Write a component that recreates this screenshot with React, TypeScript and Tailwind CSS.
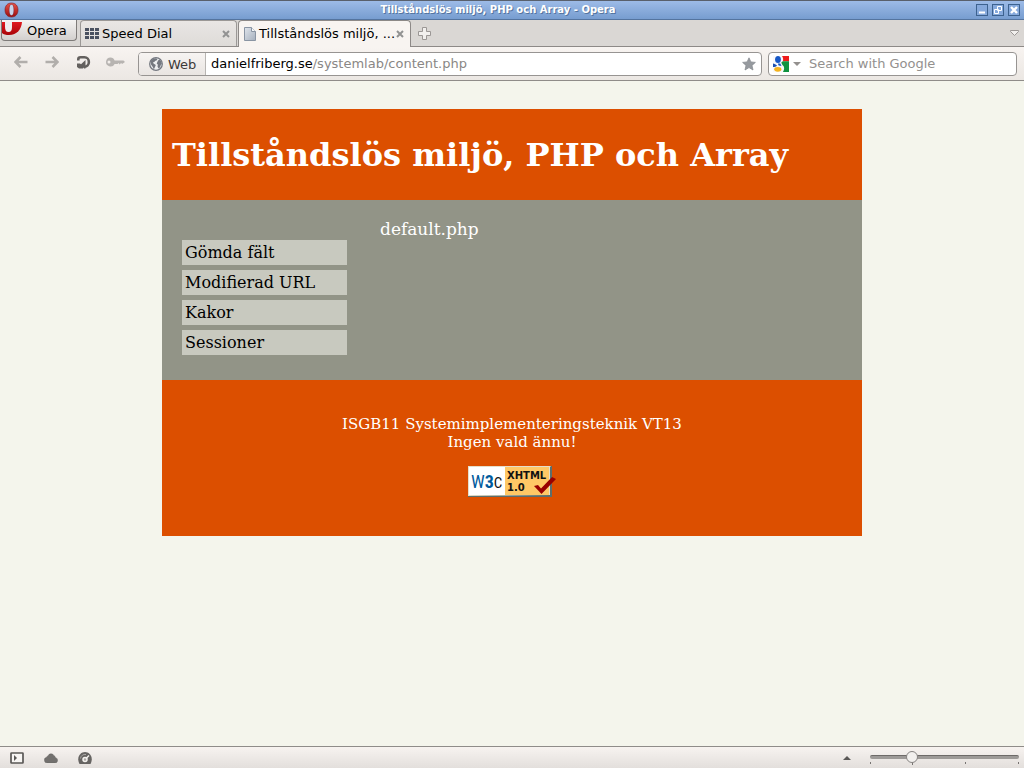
import React from "react";

const menuItems = ["Gömda fält", "Modifierad URL", "Kakor", "Sessioner"];

function OperaIcon() {
  return (
    <svg className="ml-1 h-4 w-4 shrink-0" viewBox="0 0 16 16" aria-hidden="true">
      <defs>
        <linearGradient id="operaRed" x1="0" y1="0" x2="0" y2="1">
          <stop offset="0" stopColor="#e8544a" />
          <stop offset="1" stopColor="#9c0f0f" />
        </linearGradient>
      </defs>
      <path
        fillRule="evenodd"
        fill="url(#operaRed)"
        stroke="#7e1a1e"
        strokeWidth="0.6"
        d="M7.500 1C3.500 1 1 3.800 1 8s2.500 7 6.500 7S14 12.200 14 8 11.500 1 7.500 1zM7.500 2.600c1.600 0 2.200 2.200 2.200 5.400s-.6 5.400-2.200 5.400S5.300 11.200 5.300 8s.6-5.400 2.200-5.400z"
      />
      <ellipse cx="7.500" cy="8" rx="2" ry="5.200" fill="#c9d4ea" />
    </svg>
  );
}

function OperaCorner() {
  return (
    <svg className="h-4 w-5 shrink-0 self-start" viewBox="0 0 20 16" aria-hidden="true">
      <defs>
        <linearGradient id="cornerRed" x1="0" y1="0" x2="0" y2="1">
          <stop offset="0" stopColor="#e01a20" />
          <stop offset="1" stopColor="#a90509" />
        </linearGradient>
      </defs>
      <path d="M0 2h20c-.5 7-5 13-13 13-3 0-5.500-.6-7-2z" fill="url(#cornerRed)" />
      <path d="M3 0h7v7c0 3.300-1 5-3.500 5S3 10 3 7z" fill="#efeeee" />
      <path d="M0 0h20v2H0z" fill="#f4f3f2" />
    </svg>
  );
}

function CloseX() {
  return (
    <svg className="h-2 w-2" viewBox="0 0 8 8" aria-hidden="true">
      <path d="M1 1l6 6M7 1l-6 6" stroke="#929292" strokeWidth="2" />
    </svg>
  );
}

function GridIcon() {
  return (
    <svg className="h-3 w-[15px] shrink-0" viewBox="0 0 15 12" fill="#4a5160" aria-hidden="true">
      {[0, 4, 8].map((y) =>
        [0, 5, 10].map((x) => <rect key={`${x}-${y}`} x={x} y={y} width="4" height="3" />)
      )}
    </svg>
  );
}

function PageIcon() {
  return (
    <svg className="h-[14px] w-3 shrink-0" viewBox="0 0 12 14" aria-hidden="true">
      <defs>
        <linearGradient id="pageFill" x1="0" y1="0" x2="1" y2="1">
          <stop offset="0" stopColor="#e0e5ec" />
          <stop offset="1" stopColor="#a5afbd" />
        </linearGradient>
      </defs>
      <path d="M.5.5h7l4 4v9H.5z" fill="url(#pageFill)" stroke="#8994a3" />
      <path d="M7.500.5v4h4" fill="#f6f8fa" stroke="#8994a3" />
    </svg>
  );
}

function Arrow({ back = false }: { back?: boolean }) {
  return (
    <svg className="h-3 w-[14px]" viewBox="0 0 14 12" aria-hidden="true">
      <path
        d={back ? "M13.500 6H2M6.500 1L1.500 6l5 5" : "M.5 6H12M7.500 1l5 5-5 5"}
        fill="none"
        stroke="#b1aeab"
        strokeWidth="2.600"
      />
    </svg>
  );
}

function ReloadIcon() {
  return (
    <svg className="h-[14px] w-[14px]" viewBox="0 0 14 14" aria-hidden="true">
      <path d="M1.300 5.500V4.200Q1.300 2.300 3.500 2.300H7.500A4.300 4.600 0 0 1 7.500 11.700H7" fill="none" stroke="#63605e" strokeWidth="2.600" />
      <path d="M8.500 5v8.500H7L3.500 9.800zM0 8.500h3l3 2.500v2.500H2L0 12z" fill="#63605e" />
    </svg>
  );
}

function KeyIcon() {
  return (
    <svg className="h-[10px] w-5" viewBox="0 0 20 10" aria-hidden="true">
      <path
        fillRule="evenodd"
        fill="#b7b4b1"
        d="M4.500.5A4.500 4.500 0 1 0 8.600 7h3l1-1 1 1.500 1.500-1.500 1 1 2.900-2L17.500 3.500H8.600A4.500 4.500 0 0 0 4.500.5zM3 3.500a1.500 1.500 0 1 1 0 3 1.500 1.500 0 0 1 0-3z"
      />
    </svg>
  );
}

function GlobeIcon() {
  return (
    <svg className="h-[14px] w-[14px]" viewBox="0 0 14 14" aria-hidden="true">
      <circle cx="7" cy="7" r="6.300" fill="#eceef0" stroke="#747880" strokeWidth="1.300" />
      <path d="M1.500 4L4 1.800l3-.6 1.500.8-1 1.500-1.700.4L5.600 5 4 5.300l.5 1.200L6.800 8 6 10l-1.200 2.500L3.800 10 2 7.500zM9 3.500l1.500-1 1.800 2 .6 2.500-1 .8-1 2.700-1.400 1-1-2 .4-1.800L7.700 6.500z" fill="#747880" />
    </svg>
  );
}

function StarIcon() {
  return (
    <svg className="h-[14px] w-[14px]" viewBox="0 0 14 14" aria-hidden="true">
      <path d="M7 .8l1.900 4.100 4.500.5L10 8.400l1 4.600-4-2.400L3 13l1-4.600L.6 5.400l4.500-.5z" fill="#969a9f" stroke="#83878c" strokeWidth=".7" />
    </svg>
  );
}

function GoogleIcon() {
  return (
    <svg className="h-4 w-4 shrink-0" viewBox="0 0 16 16" aria-hidden="true">
      <rect width="16" height="16" fill="#f7f8fb" />
      <path d="M9 0h7v5.300H9.800C10.500 4 10.200 1.500 9 0z" fill="#ee1c1c" />
      <path d="M8.300 6.800C8.800 5.600 10 5.300 11 5.300h5V16H10c1.800-3 1.500-5.500-.5-7z" fill="#0f9340" />
      <path d="M0 7.500c1.500.4 2.700.7 4 2C3.500 10.600 1.500 11 0 11z" fill="#1c50b0" />
      <ellipse cx="5" cy="3.500" rx="2.900" ry="3.500" fill="#1657c6" />
      <path d="M4.800 7.500h2.500L8.500 10l-2.800-.6z" fill="#1657c6" />
      <ellipse cx="4.800" cy="13.300" rx="3.600" ry="2.400" fill="#f5b31d" />
    </svg>
  );
}

function WindowButton({ label, children }: { label: string; children: React.ReactNode }) {
  return (
    <button
      type="button"
      aria-label={label}
      className="flex h-3 w-3 items-center justify-center border border-[#3d628f] bg-[#86a9dc]"
    >
      <svg className="h-[10px] w-[10px] shrink-0" viewBox="0 0 10 10" fill="none" stroke="#fff" aria-hidden="true">
        {children}
      </svg>
    </button>
  );
}

function TitleBar() {
  return (
    <header className="flex h-5 items-center border-t border-b border-t-[#59606c] border-b-[#54749f] bg-linear-to-b from-[#9dbbe7] to-[#779dd0]">
      <OperaIcon />
      <span className="grow text-center text-[10px] leading-[18px] font-bold text-white [text-shadow:1px_1px_0_#54749f]">
        Tillståndslös miljö, PHP och Array - Opera
      </span>
      <div className="flex justify-end gap-1 pr-1">
        <WindowButton label="Minimize">
          <path d="M2 7.500h6" strokeWidth="2" />
        </WindowButton>
        <WindowButton label="Restore">
          <path d="M4.500 1.500h4v4h-4zM1.500 4.500h4v4h-4z" />
        </WindowButton>
        <WindowButton label="Close">
          <path d="M2 2l6 6M8 2L2 8" strokeWidth="2.400" />
        </WindowButton>
      </div>
    </header>
  );
}

function TabBar() {
  return (
    <div className="flex h-[27px] items-end border-b border-[#8d8987] bg-[#dad7d4]">
      <button
        type="button"
        className="mr-[3px] ml-px flex h-[21px] w-[76px] shrink-0 self-start overflow-hidden rounded-b-[4px] border border-t-0 border-[#7e7b79] bg-linear-to-b from-[#f4f3f2] to-[#d3d0ce]"
      >
        <OperaCorner />
        <span className="ml-[5px] text-[13px] leading-[22px]">Opera</span>
      </button>
      <div className="flex h-[26px] w-[157px] shrink-0 items-center rounded-t-[4px] border border-b-0 border-[#9b9896] bg-linear-to-b from-[#e9e6e4] to-[#dedbd8] pr-[6px] pl-1">
        <GridIcon />
        <a href="#speed-dial" className="ml-[2px] grow text-[13px]">
          Speed Dial
        </a>
        <button type="button" aria-label="Close Speed Dial">
          <CloseX />
        </button>
      </div>
      <div className="-mb-px ml-px flex h-[27px] w-[173px] shrink-0 items-center rounded-t-[4px] border border-b-0 border-[#8d8987] bg-[#f8f4f1] pr-[6px] pl-[5px]">
        <PageIcon />
        <a href="#content" className="ml-[3px] grow text-[13px] whitespace-nowrap">
          Tillståndslös miljö, ...
        </a>
        <button type="button" aria-label="Close tab">
          <CloseX />
        </button>
      </div>
      <button type="button" aria-label="New tab" className="mb-[6px] ml-[7px]">
        <svg className="h-[13px] w-[13px]" viewBox="0 0 13 13" aria-hidden="true">
          <path d="M4.500.5h4v4h4v4h-4v4h-4v-4h-4v-4h4z" fill="#f2f0ee" stroke="#9b9795" />
        </svg>
      </button>
      <button type="button" aria-label="Closed tabs" className="mr-[5px] mb-[10px] ml-auto">
        <svg className="h-[6px] w-[9px]" viewBox="0 0 9 6" aria-hidden="true">
          <path d="M.5.500h8v1l-4 4-4-4z" fill="#f2f0ee" stroke="#9b9795" />
        </svg>
      </button>
    </div>
  );
}

function Toolbar() {
  return (
    <div className="flex h-[34px] items-center border-b border-[#8f8c89] bg-linear-to-b from-[#f8f4f1] to-[#ebe7e3] pr-[7px] pl-[14px]">
      <div className="mb-1 flex w-[124px] shrink-0 items-center">
        <button type="button" aria-label="Back">
          <Arrow back />
        </button>
        <button type="button" aria-label="Forward" className="ml-[17px]">
          <Arrow />
        </button>
        <button type="button" aria-label="Reload" className="ml-[18px]">
          <ReloadIcon />
        </button>
        <button type="button" aria-label="Wand" className="ml-[15px]">
          <KeyIcon />
        </button>
      </div>
      <div className="flex h-6 grow items-stretch overflow-hidden rounded-[4px] border border-[#979492] bg-white">
        <button
          type="button"
          className="flex w-[67px] shrink-0 items-center gap-[5px] border-r border-[#b8b5b2] bg-linear-to-b from-[#f7f4f2] to-[#e9e5e2] pl-[10px] text-[13px] text-[#3c3a39]"
        >
          <GlobeIcon />
          <span className="pt-[2px]">Web</span>
        </button>
        <div className="relative flex grow items-center">
          <input
            aria-label="Address"
            defaultValue="danielfriberg.se/systemlab/content.php"
            className="h-full w-full bg-transparent pl-[5px] text-[13px] text-transparent caret-black outline-none"
          />
          <span
            aria-hidden="true"
            className="pointer-events-none absolute left-[5px] text-[13px] leading-5 whitespace-nowrap text-[#8a8785]"
          >
            <span className="text-black">danielfriberg.se</span>/systemlab/content.php
          </span>
        </div>
        <button type="button" aria-label="Bookmark" className="mr-[5px] shrink-0">
          <StarIcon />
        </button>
      </div>
      <div className="ml-[6px] flex h-6 w-[249px] shrink-0 items-center rounded-[4px] border border-[#979492] bg-white pl-1">
        <button type="button" aria-label="Search engine" className="flex items-center gap-1">
          <GoogleIcon />
          <svg className="h-1 w-2" viewBox="0 0 8 4" aria-hidden="true">
            <path d="M0 0h8L4 4z" fill="#93908e" />
          </svg>
        </button>
        <input
          aria-label="Search with Google"
          placeholder="Search with Google"
          className="ml-2 min-w-0 grow bg-transparent text-[13px] outline-none placeholder:text-[#93908e]"
        />
      </div>
    </div>
  );
}

function ValidBadge() {
  return (
    <a href="#validator" aria-label="Valid XHTML 1.0" className="block">
      <svg className="block h-[31px] w-[88px]" viewBox="0 0 88 31">
        <path d="M0 0h84v31H0z" fill="#5c6e6c" />
        <path d="M0 0h83l-1 1v28L0 30z" fill="#e4dfcb" />
        <path d="M1 1h36v28H1z" fill="#fff" />
        <path d="M37 1h44v28H37z" fill="#ffc866" />
        <text
          x="3"
          y="22"
          fontFamily="'Roboto Condensed', 'Open Sans Condensed', Roboto, sans-serif"
          fontSize="18"
          fill="#005a9c"
        >
          W<tspan fontWeight="bold">3</tspan>
          <tspan fontSize="15" fill="#111">C</tspan>
        </text>
        <g fontFamily="'DejaVu Sans', sans-serif" fontSize="10" fontWeight="bold" fill="#111">
          <text x="39" y="13">XHTML</text>
          <text x="39" y="25">1.0</text>
        </g>
        <path d="M66 20l4-1 3 3.500 11-11.500 4 2-14.500 15z" fill="#990000" />
      </svg>
    </a>
  );
}

function Page() {
  return (
    <main className="grow bg-[#f4f5ec] px-4 pt-7 font-['DejaVu_Serif',serif]">
      <div className="mx-auto max-w-[700px] text-white">
        <header className="bg-[#dc4f00] px-[10px] pt-[27px] pb-[25px]">
          <h1 className="text-[32px] leading-[39px] font-bold">Tillståndslös miljö, PHP och Array</h1>
        </header>
        <div className="flex min-h-[180px] bg-[#929487] px-5 pt-5 pb-[25px]">
          <nav className="mt-5 w-[165px]">
            <ul className="flex flex-col gap-[5px]">
              {menuItems.map((item) => (
                <li key={item}>
                  <a href="#content" className="block bg-[#c8c9bf] px-[3px] text-[16px] leading-[25px] text-black">
                    {item}
                  </a>
                </li>
              ))}
            </ul>
          </nav>
          <p className="ml-[33px] text-[17px] leading-[18px]">default.php</p>
        </div>
        <footer className="flex flex-col items-center bg-[#dc4f00] pt-[35px] pb-[39px] text-center text-[15px] leading-[18px]">
          <p>
            ISGB11 Systemimplementeringsteknik VT13
            <br />
            Ingen vald ännu!
          </p>
          <div className="mt-[15px]">
            <ValidBadge />
          </div>
        </footer>
      </div>
    </main>
  );
}

function StatusBar() {
  return (
    <footer className="flex h-[22px] items-center border-t border-[#8f8c89] bg-linear-to-b from-[#f7f3f0] to-[#e3dfdc] pr-[5px] pl-[10px]">
      <button type="button" aria-label="Panels">
        <svg className="h-3 w-[14px]" viewBox="0 0 14 12" aria-hidden="true">
          <rect x="1" y="1" width="12" height="10" rx=".5" fill="#f7f5f3" stroke="#5a5856" strokeWidth="1.700" />
          <path d="M4 3l3 3-3 3z" fill="#5a5856" />
        </svg>
      </button>
      <button type="button" aria-label="Opera Link" className="ml-5">
        <svg className="h-[10px] w-[14px]" viewBox="0 0 14 10" aria-hidden="true">
          <path d="M3 10a2.900 2.900 0 0 1-.5-5.700A2 2 0 0 1 4 3 3.200 3.200 0 0 1 10 2.800 2.300 2.300 0 0 1 11.500 4.700 2.700 2.700 0 0 1 11.300 10z" fill="#72706e" stroke="#666462" strokeWidth=".5" />
        </svg>
      </button>
      <button type="button" aria-label="Opera Turbo" className="ml-5">
        <svg className="h-3 w-[14px]" viewBox="0 0 14 12" aria-hidden="true">
          <path d="M1.500 12C-2 5 2.500 0 7 0s9 5 5.500 12z" fill="#666462" />
          <path d="M2.500 6.500A4.500 4.500 0 0 1 8 2.500" fill="none" stroke="#aaa7a5" />
          <circle cx="7" cy="7.500" r="2" fill="#aaa7a5" stroke="#f4f1ee" strokeWidth="1.500" />
          <path d="M8 6.500l3-3" stroke="#f4f1ee" strokeWidth="1.500" />
        </svg>
      </button>
      <button type="button" aria-label="View" className="mr-[19px] ml-auto">
        <svg className="h-1 w-2" viewBox="0 0 8 4" aria-hidden="true">
          <path d="M4 0l4 4H0z" fill="#5a5856" />
        </svg>
      </button>
      <div className="relative flex h-full w-[149px] items-center">
        <svg className="pointer-events-none absolute inset-x-0 bottom-[3px] h-[3px] w-full" viewBox="0 0 149 3" fill="#777472" aria-hidden="true">
          <path d="M0 0h1v2H0zM42 0h1v3h-1zM95 0h1v2h-1zM148 0h1v2h-1z" />
        </svg>
        <input
          type="range"
          aria-label="Zoom"
          min="0"
          max="100"
          defaultValue="26"
          className="relative -mt-[2px] h-3 w-full appearance-none bg-transparent [&::-webkit-slider-runnable-track]:h-1 [&::-webkit-slider-runnable-track]:rounded-full [&::-webkit-slider-runnable-track]:border-t [&::-webkit-slider-runnable-track]:border-[#6d6a68] [&::-webkit-slider-runnable-track]:bg-[#9d9a98] [&::-webkit-slider-thumb]:-mt-[5px] [&::-webkit-slider-thumb]:h-3 [&::-webkit-slider-thumb]:w-3 [&::-webkit-slider-thumb]:appearance-none [&::-webkit-slider-thumb]:rounded-full [&::-webkit-slider-thumb]:border [&::-webkit-slider-thumb]:border-[#868381] [&::-webkit-slider-thumb]:bg-[#f2f0ee]"
        />
      </div>
    </footer>
  );
}

export default function App() {
  return (
    <div className="flex min-h-screen flex-col font-['DejaVu_Sans',sans-serif] text-black">
      <TitleBar />
      <TabBar />
      <Toolbar />
      <Page />
      <StatusBar />
    </div>
  );
}
